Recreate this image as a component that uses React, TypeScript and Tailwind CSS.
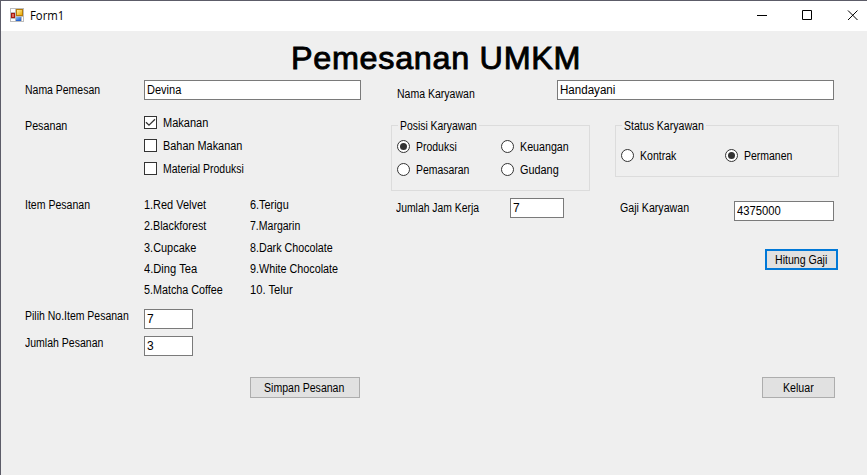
import { useLayoutEffect, useRef, useState } from 'react';
import type { ReactNode } from 'react';

/* Single line of text, condensed or widened to the given width. */
function Label({ text, w, className = '' }: { text: string; w: number; className?: string }) {
  const ref = useRef<HTMLSpanElement>(null);
  const [ratio, setRatio] = useState(1);
  useLayoutEffect(() => {
    if (ref.current) setRatio(w / ref.current.offsetWidth);
  }, [w, text]);
  return (
    <span className={`block h-4 shrink-0 leading-4 whitespace-nowrap ${className}`} style={{ width: w }}>
      <span ref={ref} className="inline-block origin-left" style={{ transform: `scaleX(${ratio})` }}>
        {text}
      </span>
    </span>
  );
}

function TextBox({ text, w, className = '' }: { text: string; w: number; className?: string }) {
  return (
    <div className={`flex h-5 shrink-0 items-center border border-[#7a7a7a] bg-white pl-[2px] ${className}`}>
      <Label text={text} w={w} />
    </div>
  );
}

function Check({ text, w, checked = false }: { text: string; w: number; checked?: boolean }) {
  return (
    <div className="flex h-[23px] items-center gap-[6px]">
      <span className="flex size-[13px] border border-[#333] bg-white">
        {checked && (
          <svg width="11" height="11" viewBox="0 0 11 11" fill="none" stroke="#333" strokeWidth="1.3">
            <path d="M1 5.2 4 8.2 10 2.2" />
          </svg>
        )}
      </span>
      <Label text={text} w={w} />
    </div>
  );
}

function Radio({ text, w, checked = false }: { text: string; w: number; checked?: boolean }) {
  return (
    <div className="flex h-[23px] w-[104px] items-center gap-[6px]">
      <span className="flex size-[13px] shrink-0 items-center justify-center rounded-full border border-[#333] bg-white">
        {checked && <span className="size-[7px] rounded-full bg-[#333]" />}
      </span>
      <Label text={text} w={w} />
    </div>
  );
}

function GroupBox({ title, w, className, children }: { title: string; w: number; className: string; children: ReactNode }) {
  return (
    <div role="group" className={`border border-[#dcdcdc] pl-[5px] ${className}`}>
      <div className="-mt-2 ml-[1px] flex w-fit bg-[#efefef] px-[2px]">
        <Label text={title} w={w} />
      </div>
      {children}
    </div>
  );
}

function Button({ text, w, className }: { text: string; w: number; className: string }) {
  return (
    <button className={`flex h-[21px] items-center justify-center bg-[#e1e1e1] ${className}`}>
      <Label text={text} w={w} />
    </button>
  );
}

const items: [string, number, string, number, string][] = [
  ['1.Red Velvet', 62, '6.Terigu', 39, 'h-[21px]'],
  ['2.Blackforest', 62, '7.Margarin', 50, 'h-[22px]'],
  ['3.Cupcake', 52, '8.Dark Chocolate', 83, 'h-[21px]'],
  ['4.Ding Tea', 53, '9.White Chocolate', 88, 'h-[21px]'],
  ['5.Matcha Coffee', 79, '10. Telur', 43, 'h-[19px]'],
];

function FormIcon() {
  return (
    <svg className="mb-[2px]" width="14" height="14" viewBox="0 0 14 14" shapeRendering="crispEdges">
      <defs>
        <linearGradient id="gold" x2="1" y2="1">
          <stop stopColor="#fff0a0" />
          <stop offset="1" stopColor="#eaa800" />
        </linearGradient>
        <linearGradient id="blue" x2="1" y2="1">
          <stop stopColor="#8cc0f5" />
          <stop offset="1" stopColor="#2864cf" />
        </linearGradient>
      </defs>
      <path fill="#bcbcbc" d="M0 0h14v14H0z" />
      <path fill="#fff" d="M1 1h4v3H1zM1 11h4v2H1zM12 9h1v4h-1z" />
      <path fill="#a51b10" d="M1 5h4v5H1z" />
      <path fill="#e0685a" d="M2 6h2v3H2z" />
      <path fill="#b77c08" d="M6 1h7v7H6z" />
      <path fill="url(#gold)" d="M7 2h5v5H7z" />
      <path fill="#2864cf" d="M6 9h5v4H6z" />
      <path fill="url(#blue)" d="M6 9h5v3H6z" />
    </svg>
  );
}

export default function App() {
  return (
    <div className="flex h-[475px] w-[867px] flex-col overflow-hidden border-t border-l border-[#5c5c68] bg-[#efefef] font-['Liberation_Sans',Arial,sans-serif] text-[12px] text-black">
      <header className="flex h-[30px] shrink-0 items-center bg-white pl-[9px]">
        <FormIcon />
        <Label text="Form1" w={34} className="ml-[6px] font-['Open_Sans','Noto_Sans',sans-serif]" />
        <svg className="ml-auto" width="110" height="30" viewBox="0 0 110 30" fill="none" stroke="#000">
          <path d="M0 14.5h10M45.5 9.5h9v9h-9zM91 9.5l9.5 9.5M100.5 9.5 91 19" />
        </svg>
      </header>

      <h1 className="flex h-[49px] shrink-0 items-start pt-[11px] pl-[290px] text-[32px]">
        <Label
          text="Pemesanan UMKM"
          w={290}
          className="h-8 leading-8 tracking-[0.7px] [-webkit-text-stroke:0.9px_#000]"
        />
      </h1>

      <main className="flex">
        <section className="w-[390px] shrink-0 pl-6">
          <div className="flex h-[31px]">
            <Label text="Nama Pemesan" w={75} className="mt-[2px]" />
            <TextBox text="Devina" w={34} className="ml-[44px] w-[217px]" />
          </div>
          <div className="flex h-[87px]">
            <Label text="Pesanan" w={42} className="mt-[7px]" />
            <div className="ml-[77px]">
              <Check text="Makanan" w={45} checked />
              <Check text="Bahan Makanan" w={79} />
              <Check text="Material Produksi" w={81} />
            </div>
          </div>
          <div className="flex h-[111px]">
            <Label text="Item Pesanan" w={65} className="-mt-px" />
            <div className="-mt-px ml-[54px]">
              {items.map(([a, aw, b, bw, h]) => (
                <div key={a} className={`flex ${h}`}>
                  <div className="w-[106px]">
                    <Label text={a} w={aw} />
                  </div>
                  <Label text={b} w={bw} />
                </div>
              ))}
            </div>
          </div>
          <div className="flex h-[27px]">
            <Label text="Pilih No.Item Pesanan" w={104} className="-mt-px" />
            <TextBox text="7" w={7} className="ml-[15px] w-[49px]" />
          </div>
          <div className="flex h-[41px]">
            <Label text="Jumlah Pesanan" w={78} className="-mt-px" />
            <TextBox text="3" w={7} className="ml-[41px] w-[49px]" />
          </div>
          <Button text="Simpan Pesanan" w={80} className="ml-[225px] w-[110px] border border-[#adadad] pr-[2px]" />
        </section>

        <section className="grow">
          <div className="flex h-[45px] pl-[6px]">
            <Label text="Nama Karyawan" w={78} className="mt-[6px]" />
            <TextBox text="Handayani" w={55} className="ml-[82px] w-[277px]" />
          </div>
          <div className="flex h-[73px] gap-[25px]">
            <GroupBox title="Posisi Karyawan" w={77} className="h-[66px] w-[199px]">
              <div className="mt-px grid grid-cols-[104px_84px]">
                <Radio text="Produksi" w={41} checked />
                <Radio text="Keuangan" w={49} />
                <Radio text="Pemasaran" w={53} />
                <Radio text="Gudang" w={39} />
              </div>
            </GroupBox>
            <GroupBox title="Status Karyawan" w={80} className="h-[52px] w-[224px]">
              <div className="mt-[10px] flex">
                <Radio text="Kontrak" w={36} />
                <Radio text="Permanen" w={48} checked />
              </div>
            </GroupBox>
          </div>
          <div className="flex h-[51px] pl-[5px]">
            <Label text="Jumlah Jam Kerja" w={83} className="mt-[2px]" />
            <TextBox text="7" w={7} className="ml-[31px] w-[54px]" />
            <Label text="Gaji Karyawan" w={69} className="mt-[2px] ml-[56px]" />
            <TextBox text="4375000" w={44} className="mt-[3px] ml-[45px] w-[100px]" />
          </div>
          <div className="flex h-[128px] items-start pl-[374px]">
            <Button text="Hitung Gaji" w={52} className="w-[73px] border-2 border-[#0078d7] pr-[2px]" />
          </div>
          <div className="flex pl-[371px]">
            <Button text="Keluar" w={31} className="w-[73px] border border-[#adadad] pr-px" />
          </div>
        </section>
      </main>
    </div>
  );
}
